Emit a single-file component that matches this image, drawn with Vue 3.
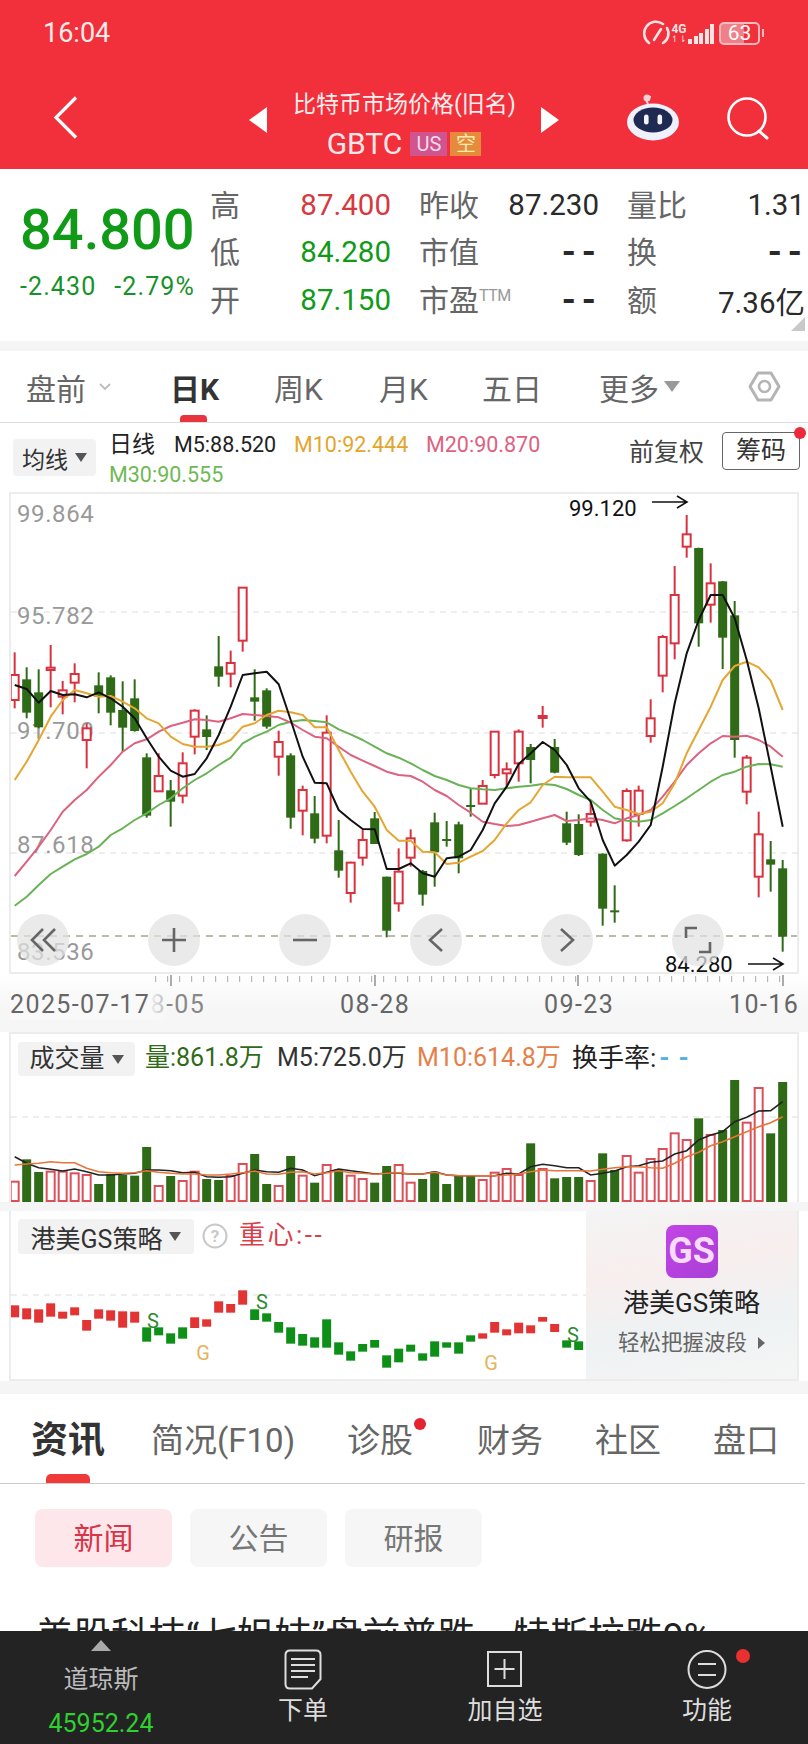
<script setup>
// данные свечей: [цвет, верх тени, верх тела, низ тела, низ тени] (y в пикселях кропа, 490 + y/3)
const rawCandles = [
  ['r',487,555,630,655],['g',532,568,668,685],['g',538,607,712,715],['r',465,533,540,652],['r',573,601,620,673],
  ['r',520,552,578,637],['r',700,715,750,835],['g',547,586,620,670],['g',556,562,668,706],['g',574,660,713,785],
  ['g',568,625,723,725],['g',790,802,977,983],['r',790,858,904,905],['g',870,901,935,1010],['r',787,820,917,940],
  ['r',658,662,740,793],['g',676,718,741,780],['g',438,529,560,590],['r',482,519,551,592],['r',293,293,452,485],
  ['g',538,622,635,692],['g',595,601,710,716],['r',722,756,800,857],['g',790,796,983,1016],['r',887,900,962,1036],
  ['g',918,970,1046,1060],['r',676,728,1037,1060],['g',990,1081,1142,1163],['r',1115,1118,1209,1238],['r',1020,1050,1103,1127],
  ['g',966,985,1062,1062],['g',1160,1160,1322,1342],['r',1075,1145,1240,1265],['r',1018,1045,1103,1130],['g',1140,1143,1214,1247],
  ['g',968,997,1087,1190],['g',993,1047,1053,1070],['g',995,1003,1105,1150],['g',895,945,950,980],['r',870,888,941,942],
  ['r',723,725,855,865],['r',817,838,850,890],['r',718,725,820,875],['g',762,771,810,880],['r',648,678,683,713],
  ['g',747,771,848,850],['g',965,1000,1058,1065],['g',973,1002,1095,1098],['r',935,972,995,1010],['g',1090,1091,1256,1307],
  ['g',1186,1261,1265,1298],['r',895,903,1051,1055],['r',887,902,972,1010],['r',628,685,738,758],['r',435,441,557,607],
  ['r',228,315,460,508],['r',75,133,170,203],['g',173,174,400,470],['r',220,280,344,398],['g',273,274,443,537],
  ['g',333,376,750,803],['r',795,803,905,943],['r',965,1033,1160,1222],['g',1053,1108,1124,1205],['g',1110,1135,1340,1385]
]
const xAt = (i) => 14.67 + 12 * i
const py = (z) => 490 + z / 3
const vy = (z) => 1000 + z / 3

const candles = rawCandles.map((c, i) => ({
  up: c[0] === 'r',
  x: xAt(i),
  wt: py(c[1]),
  wb: py(c[4]),
  bt: py(c[2]),
  bh: Math.max(py(c[3]) - py(c[2]), 2)
}))

const toLine = (arr, fn) => arr.map((z, i) => `${xAt(i).toFixed(1)},${fn(z).toFixed(1)}`).join(' ')

const ma5 = [585,597,638,603,615,613,622,607,625,650,685,745,800,842,860,852,805,735,650,555,550,545,583,690,800,878,880,960,990,1017,1018,1137,1137,
  1120,1150,1160,1105,1100,1080,1020,940,890,822,790,756,780,825,895,935,1050,1127,1095,1055,1005,830,640,490,390,315,315,385,510,655,830,1010]
const ma10 = [870,815,750,680,630,600,610,620,618,635,655,685,700,740,762,770,770,765,750,710,700,675,662,667,675,712,712,780,845,905,950,1020,1052,
  1052,1085,1087,1122,1118,1100,1083,1050,1000,960,937,885,860,862,862,862,905,950,960,972,965,940,880,790,720,650,570,528,515,532,572,660]
const ma20 = [1158,1115,1070,1020,965,930,900,860,825,785,760,748,725,708,698,688,690,695,685,672,675,678,682,698,720,740,745,770,795,812,828,845,855,
  858,875,900,918,945,968,995,1002,1008,1005,995,985,975,993,990,985,990,1000,985,975,960,920,875,825,790,760,738,740,737,750,770,800]
const ma30 = [1247,1220,1185,1152,1130,1108,1092,1070,1035,1015,990,970,945,925,895,870,850,825,803,760,740,725,705,695,690,693,697,718,733,750,770,790,803,
  820,840,858,870,885,895,898,900,895,890,887,882,885,897,915,930,960,985,992,995,990,970,948,925,900,875,855,845,830,822,823,830]

const maLines = [
  { color: '#69b356', points: toLine(ma30, py) },
  { color: '#dd6280', points: toLine(ma20, py) },
  { color: '#e5a632', points: toLine(ma10, py) },
  { color: '#111', points: toLine(ma5, py) }
]

const volTops = [545,478,516,515,515,520,525,552,522,525,527,441,558,528,543,515,537,540,528,492,462,552,558,468,527,548,495,508,527,537,548,498,495,
  548,537,515,552,525,528,540,518,507,525,430,507,535,531,531,543,460,510,468,518,477,447,400,420,355,405,390,240,368,264,400,246]
const volBars = volTops.map((z, i) => ({
  up: rawCandles[i][0] === 'r',
  x: xAt(i),
  y: vy(z),
  h: 1202 - vy(z)
}))
const volBlack = [470,490,503,508,513,507,515,525,525,522,520,510,510,512,518,517,530,532,530,520,510,515,517,505,510,527,517,507,512,517,522,520,520,
  522,522,515,525,527,527,527,527,520,522,500,493,497,503,503,525,520,513,500,497,487,483,462,452,420,405,395,365,352,333,332,305]
const volOrange = [495,492,490,485,488,488,505,515,518,520,518,512,517,520,522,522,525,525,522,518,513,522,523,517,515,522,518,512,518,520,523,520,518,
  522,522,517,525,527,527,527,527,525,522,515,510,512,512,512,513,508,503,500,500,503,505,490,470,457,437,425,410,395,380,368,350]
const volLines = [
  { color: '#222', points: toLine(volBlack, vy) },
  { color: '#e8743a', points: toLine(volOrange, vy) }
]

const gsRaw = [
  [916,952],[925,958],[928,968],[910,950],[935,956],[922,946],[960,992],[928,956],[931,962],[934,983],[935,968],
  [982,1025],[982,1006],[1000,1031],[982,1016],[952,984],[958,980],[904,938],[912,938],[871,914],[928,960],[940,965],
  [966,998],[982,1031],[1002,1037],[1012,1043],[958,1043],[1027,1064],[1054,1082],[1032,1055],[1020,1043],[1066,1103],[1046,1087],
  [1034,1055],[1060,1082],[1024,1070],[1027,1043],[1027,1061],[1006,1025],[1000,1016],[966,998],[988,1006],[968,1000],[976,1000],
  [951,965],[972,996],[1021,1043],[1024,1050]
]
const isGsRed = (i) => i <= 10 || (i >= 15 && i <= 19) || (i >= 39 && i <= 45)
const gsBars = gsRaw.map((b, i) => ({
  x: xAt(i) - 4.5,
  y: vy(b[0]),
  h: vy(b[1]) - vy(b[0]),
  red: isGsRed(i)
}))
const gsMarks = [
  { t: 'S', x: 153, y: 1321, c: '#2c8c2c' },
  { t: 'G', x: 203, y: 1353, c: '#e6b35c' },
  { t: 'S', x: 262, y: 1302, c: '#2c8c2c' },
  { t: 'G', x: 491, y: 1363, c: '#e6b35c' },
  { t: 'S', x: 573, y: 1335, c: '#2c8c2c' }
]

const axisLabels = [
  { t: '99.864', y: 514 },
  { t: '95.782', y: 616 },
  { t: '91.700', y: 731 },
  { t: '87.618', y: 845 },
  { t: '83.536', y: 952 }
]
const grids = [612, 733, 853]

// риски под графиком
const ticks = []
for (let i = 12; i <= 64; i++) ticks.push({ x: xAt(i) - 3, major: false })
const majors = [171, 375, 578, 783]

const stats = [
  [{ l: '高', v: '87.400', c: 'red' }, { l: '昨收', v: '87.230', c: 'dark' }, { l: '量比', v: '1.31', c: 'dark' }],
  [{ l: '低', v: '84.280', c: 'green' }, { l: '市值', v: '--', c: 'dark' }, { l: '换', v: '--', c: 'dark' }],
  [{ l: '开', v: '87.150', c: 'green' }, { l: '市盈', ttm: true, v: '--', c: 'dark' }, { l: '额', v: '7.36亿', c: 'dark' }]
]
const periods = ['周K', '月K', '五日']
const newsTabs = ['简况(F10)', '诊股', '财务', '社区', '盘口']
</script>

<template>
  <div class="page">
    <header class="top">
      <div class="status">
        <span class="time">16:04</span>
        <div class="status-icons">
          <svg class="gauge" width="28" height="26" viewBox="0 0 28 26" fill="none" stroke="#fbe3e4" stroke-width="2.6" stroke-linecap="round">
            <path d="M6 23 A11 11 0 0 1 20 4" />
            <path d="M24 8 A11 11 0 0 1 20 23" />
            <path d="M11 20 L18 9" />
          </svg>
          <div class="net">
            <span class="net-4g">4G</span>
            <span class="net-arrows">↿⇂</span>
          </div>
          <div class="bars">
            <i style="height:5px"></i><i style="height:8px"></i><i style="height:11px"></i><i style="height:15px"></i><i style="height:20px"></i>
          </div>
          <div class="battery"><span>63</span></div>
          <div class="battery-tip"></div>
        </div>
      </div>
      <div class="nav">
        <svg class="back" width="25" height="43" viewBox="0 0 25 43" fill="none" stroke="#fff" stroke-width="3.2">
          <path d="M23 1.5 L3 21.5 L23 41.5" />
        </svg>
        <div class="nav-center">
          <div class="tri tri-left"></div>
          <div class="name">
            <div class="name-cn">比特币市场价格(旧名)</div>
            <div class="name-code">
              <span class="code">GBTC</span>
              <span class="tag tag-us">US</span>
              <span class="tag tag-short">空</span>
            </div>
          </div>
          <div class="tri tri-right"></div>
        </div>
        <div class="nav-right">
          <svg width="54" height="50" viewBox="0 0 54 50">
            <path d="M22 11 C19 6 21 3 25 4" fill="none" stroke="#f8d0d5" stroke-width="2" />
            <circle cx="21" cy="5" r="3.5" fill="#f8d0d5" />
            <ellipse cx="27" cy="29" rx="26" ry="18.5" fill="#eef0fb" />
            <ellipse cx="27" cy="27" rx="19.5" ry="12.5" fill="#1e2a52" />
            <rect x="18" y="21.5" width="4.6" height="10" rx="2.3" fill="#f2f4ff" />
            <rect x="31.5" y="21.5" width="4.6" height="10" rx="2.3" fill="#f2f4ff" />
          </svg>
          <svg class="search" width="44" height="46" viewBox="0 0 44 46" fill="none" stroke="#fff" stroke-width="3">
            <circle cx="21" cy="21" r="18.5" stroke-width="2.6" />
            <path d="M33 35 L41 42" stroke-linecap="round" />
          </svg>
        </div>
      </div>
    </header>

    <section class="quote">
      <div class="price">
        <div class="last">84.800</div>
        <div class="change"><span>-2.430</span><span>-2.79%</span></div>
      </div>
      <div class="stats">
        <template v-for="(row, r) in stats" :key="r">
          <div v-for="cell in row" :key="cell.l" class="stat">
            <span class="stat-label">{{ cell.l }}<small v-if="cell.ttm">TTM</small></span>
            <span class="stat-value" :class="[cell.c, { dash: cell.v === '--' }]">{{ cell.v }}</span>
          </div>
        </template>
      </div>
      <div class="corner"></div>
    </section>
    <div class="band band-a"></div>

    <div class="tabs">
      <div class="tab">盘前<svg class="chev" width="12" height="8" viewBox="0 0 12 8" fill="none" stroke="#bbb" stroke-width="1.8"><path d="M1 1 L6 6 L11 1" /></svg></div>
      <div class="tab tab-on">日K<i class="mark"></i></div>
      <div v-for="p in periods" :key="p" class="tab">{{ p }}</div>
      <div class="tab">更多<i class="down down-big"></i></div>
      <svg class="hex" width="33" height="31" viewBox="0 0 33 31" fill="none" stroke="#b4b4b4" stroke-width="3">
        <path d="M10 2 H23 L31 15.5 L23 29 H10 L2 15.5 Z" stroke-linejoin="round" />
        <circle cx="16.5" cy="15.5" r="5.5" stroke-width="2.6" />
      </svg>
    </div>

    <div class="ma-head">
      <div class="chip chip-ma">均线<i class="down"></i></div>
      <div class="ma-values">
        <div class="ma-row">
          <span class="ma-day">日线</span>
          <span class="m5">M5:88.520</span>
          <span class="m10">M10:92.444</span>
          <span class="m20">M20:90.870</span>
        </div>
        <div class="ma-row"><span class="m30">M30:90.555</span></div>
      </div>
      <div class="ma-right">
        <span class="adjust">前复权</span>
        <div class="chouma">筹码<i class="chouma-dot"></i></div>
      </div>
    </div>

    <div class="box box-price">
      <svg class="chart" width="786" height="478" viewBox="11 494 786 478">
        <line v-for="g in grids" :key="g" x1="11" x2="797" :y1="g" :y2="g" stroke="#ddd" stroke-width="1" stroke-dasharray="6 5" />
        <text v-for="a in axisLabels" :key="a.t" class="axis" x="17" :y="a.y">{{ a.t }}</text>
        <line x1="11" x2="797" y1="936" y2="936" stroke="#a5a58f" stroke-width="1.4" stroke-dasharray="7 6" />
        <g v-for="c in candles" :key="c.x">
          <line :x1="c.x" :x2="c.x" :y1="c.wt" :y2="c.wb" :stroke="c.up ? '#d8323f' : '#2f6a17'" stroke-width="2" />
          <rect v-if="c.up" :x="c.x - 4" :y="c.bt" width="8" :height="c.bh" fill="#fff" stroke="#d8323f" stroke-width="2" />
          <rect v-else :x="c.x - 4.5" :y="c.bt" width="9" :height="c.bh" fill="#2f6a17" />
        </g>
        <polyline v-for="l in maLines" :key="l.color" :points="l.points" fill="none" :stroke="l.color" stroke-width="2" stroke-linejoin="round" />
        <text class="mark-text" x="569" y="508">99.120</text>
        <path d="M652 502 H686 M677 496 L687 502 L677 508" fill="none" stroke="#111" stroke-width="1.6" />
        <text class="mark-text" x="665" y="964">84.280</text>
        <path d="M748 964 H782 M773 958 L783 964 L773 970" fill="none" stroke="#111" stroke-width="1.6" />
      </svg>
      <div class="zoom-row">
        <button class="round">
          <svg width="26" height="26" viewBox="0 0 26 26" fill="none" stroke="#666" stroke-width="2.6"><path d="M13 2 L2 13 L13 24 M25 2 L14 13 L25 24" /></svg>
        </button>
        <button class="round">
          <svg width="26" height="26" viewBox="0 0 26 26" fill="none" stroke="#666" stroke-width="2.6"><path d="M13 1 V25 M1 13 H25" /></svg>
        </button>
        <button class="round">
          <svg width="26" height="26" viewBox="0 0 26 26" fill="none" stroke="#666" stroke-width="2.6"><path d="M1 13 H25" /></svg>
        </button>
        <button class="round">
          <svg width="26" height="26" viewBox="0 0 26 26" fill="none" stroke="#666" stroke-width="2.6"><path d="M19 2 L7 13 L19 24" /></svg>
        </button>
        <button class="round">
          <svg width="26" height="26" viewBox="0 0 26 26" fill="none" stroke="#666" stroke-width="2.6"><path d="M7 2 L19 13 L7 24" /></svg>
        </button>
        <button class="round">
          <svg width="30" height="30" viewBox="0 0 30 30" fill="none" stroke="#666" stroke-width="2.6"><path d="M3 13 V3 H14 M27 17 V27 H16" /></svg>
        </button>
      </div>
    </div>

    <div class="dates">
      <svg class="ticks" width="808" height="14" viewBox="0 0 808 14">
        <line v-for="t in ticks" :key="t.x" :x1="t.x" :x2="t.x" y1="2" y2="8" stroke="#aaa" stroke-width="1" />
        <line v-for="m in majors" :key="m" :x1="m" :x2="m" y1="1" y2="12" stroke="#888" stroke-width="1.4" />
      </svg>
      <div class="date-row">
        <span class="date date-first">2025-07-17</span>
        <span class="date date-b">08-05</span>
        <span class="date date-c">08-28</span>
        <span class="date date-d">09-23</span>
        <span class="date date-e">10-16</span>
      </div>
    </div>

    <div class="box box-vol">
      <div class="vol-head">
        <div class="chip chip-vol">成交量<i class="down"></i></div>
        <span class="vol-now">量:861.8万</span>
        <span class="vol-m5">M5:725.0万</span>
        <span class="vol-m10">M10:614.8万</span>
        <span class="vol-rate">换手率:<em>--</em></span>
      </div>
      <svg class="chart" width="786" height="122" viewBox="11 1080 786 122">
        <line x1="11" x2="797" y1="1117" y2="1117" stroke="#ddd" stroke-dasharray="6 5" />
        <g v-for="b in volBars" :key="b.x">
          <rect v-if="b.up" :x="b.x - 4" :y="b.y" width="8" :height="b.h - 1" fill="#fff" stroke="#d9505b" stroke-width="2" />
          <rect v-else :x="b.x - 4.5" :y="b.y" width="9" :height="b.h" fill="#2f6a17" />
        </g>
        <polyline v-for="l in volLines" :key="l.color" :points="l.points" fill="none" :stroke="l.color" stroke-width="1.6" />
      </svg>
    </div>
    <div class="band band-b"></div>

    <div class="box box-gs">
      <div class="gs-left">
        <div class="gs-head">
          <div class="chip chip-gs">港美GS策略<i class="down"></i></div>
          <svg class="help" width="26" height="26" viewBox="0 0 26 26">
            <circle cx="13" cy="13" r="11.5" fill="none" stroke="#c8c8c8" stroke-width="2" />
            <text x="13" y="19" text-anchor="middle" class="help-q">?</text>
          </svg>
          <span class="gs-center">重心:--</span>
        </div>
        <svg class="chart" width="575" height="119" viewBox="11 1260 575 119">
          <line x1="11" x2="586" y1="1295" y2="1295" stroke="#ddd" stroke-dasharray="6 5" />
          <rect v-for="b in gsBars" :key="b.x" :x="b.x" :y="b.y" width="9" :height="b.h" :fill="b.red ? '#e33434' : '#0e8f17'" />
          <text v-for="m in gsMarks" :key="m.x" class="gs-mark" :x="m.x" :y="m.y" :fill="m.c">{{ m.t }}</text>
        </svg>
      </div>
      <div class="gs-promo">
        <div class="gs-logo">GS</div>
        <div class="gs-title">港美GS策略</div>
        <div class="gs-sub">轻松把握波段<i class="right"></i></div>
      </div>
    </div>
    <div class="band band-c"></div>

    <div class="news-tabs">
      <div class="news-tab news-on">资讯<i class="news-mark"></i></div>
      <div v-for="t in newsTabs" :key="t" class="news-tab">
        {{ t }}<i v-if="t === '诊股'" class="news-dot"></i>
      </div>
    </div>
    <div class="subs">
      <div class="sub sub-on">新闻</div>
      <div class="sub">公告</div>
      <div class="sub">研报</div>
    </div>
    <div class="headline">美股科技“七姐妹”盘前普跌，特斯拉跌9%</div>

    <footer class="bottom">
      <div class="bottom-item index">
        <i class="up"></i>
        <span class="index-name">道琼斯</span>
        <span class="index-val">45952.24</span>
      </div>
      <div class="bottom-item">
        <svg width="38" height="41" viewBox="0 0 38 41" fill="none" stroke="#ddd" stroke-width="2">
          <path d="M6 1.5 H32 Q36.5 1.5 36.5 6 V30 L28 39.5 H6 Q1.5 39.5 1.5 35 V6 Q1.5 1.5 6 1.5 Z" />
          <path d="M7 10 H31 M7 16 H31 M7 22 H31 M7 28 H24" stroke-width="1.8" />
        </svg>
        <span class="bottom-text">下单</span>
      </div>
      <div class="bottom-item">
        <svg width="38" height="41" viewBox="0 0 38 41" fill="none" stroke="#ddd" stroke-width="2">
          <rect x="2" y="3" width="33" height="34" />
          <path d="M18.5 10 V30 M8.5 20 H28.5" />
        </svg>
        <span class="bottom-text">加自选</span>
      </div>
      <div class="bottom-item">
        <svg width="40" height="41" viewBox="0 0 40 41" fill="none" stroke="#ddd" stroke-width="2">
          <circle cx="20" cy="20.5" r="18.5" />
          <path d="M11 15 H29 M11 26 H29" />
        </svg>
        <span class="bottom-text">功能</span>
        <i class="func-dot"></i>
      </div>
    </footer>
  </div>
</template>

<style scoped>
.page {
  position: relative;
  width: 808px;
  height: 1744px;
  overflow: hidden;
  background: #fff;
  font-family: Roboto, "Noto Sans CJK SC", sans-serif;
  color: #222;
}
i { display: block; font-style: normal; }
em { font-style: normal; }

/* шапка */
.top { height: 169px; background: #f1303c; color: #fff; }
.status { height: 66px; box-sizing: border-box; display: flex; justify-content: space-between; align-items: flex-start; padding: 11px 44px 0 43px; }
.time { font-size: 27px; line-height: 44px; height: 44px; color: #fbeaea; }
.status-icons { display: flex; align-items: center; height: 44px; }
.gauge { margin-right: -2px; }
.net { width: 18px; margin-left: 1px; display: flex; flex-direction: column; align-items: center; line-height: 1; }
.net-4g { font-size: 12px; font-weight: 700; color: #fbe3e4; }
.net-arrows { font-size: 9px; color: #fbe3e4; }
.bars { display: flex; align-items: flex-end; gap: 1.5px; height: 22px; }
.bars i { width: 4px; background: #fbe3e4; }
.battery {
  width: 41px;
  height: 23px;
  margin-left: 5px;
  border: 2px solid #f6b9bd;
  border-radius: 5px;
  box-sizing: border-box;
  background: linear-gradient(90deg, #f08087 63%, transparent 63%);
  text-align: center;
  font-size: 21px;
  line-height: 19px;
  color: #fff;
}
.battery-tip { width: 2px; height: 8px; margin-left: 2px; background: #f6b9bd; }

.nav { position: relative; height: 103px; display: grid; grid-template-columns: 1fr auto 1fr; align-items: center; }
.back { margin-left: 53px; }
.nav-center { display: flex; align-items: center; margin-top: 14px; }
.tri { width: 0; height: 0; border-top: 13px solid transparent; border-bottom: 13px solid transparent; margin-top: -10px; }
.tri-left { border-right: 18px solid #fff; margin-right: 26px; }
.tri-right { border-left: 18px solid #fff; margin-left: 26px; }
.name { width: 222px; text-align: center; }
.name-cn { font-size: 23px; line-height: 30px; white-space: nowrap; color: #fdeeee; }
.name-code { display: flex; justify-content: center; align-items: center; height: 30px; margin-top: 9px; }
.code { font-size: 30px; line-height: 30px; margin-right: 8px; color: #fbe7e7; }
.tag { display: block; height: 24px; line-height: 24px; text-align: center; font-size: 20px; }
.tag-us { width: 37px; background: #d1548f; margin-right: 3px; color: #f6dcea; }
.tag-short { width: 31px; background: #e68a3c; color: #fbe9b0; font-size: 20px; }
.nav-right { display: flex; align-items: center; justify-content: flex-end; gap: 46px; padding-right: 38px; }
.search { margin-top: 3px; }

/* котировка */
.quote { position: relative; height: 172px; box-sizing: border-box; padding: 12px 3px 0 20px; display: flex; }
.price { width: 190px; flex: none; }
.last { font-size: 56px; line-height: 58px; margin-top: 20px; font-weight: 500; color: #119a17; white-space: nowrap; }
.change { display: flex; gap: 18px; margin-top: 13px; font-size: 25px; line-height: 30px; letter-spacing: 1.1px; color: #17922a; white-space: nowrap; }
.stats { display: grid; grid-template-columns: 181px 180px 178px; column-gap: 28px; grid-auto-rows: 47.5px; }
.stat { display: flex; justify-content: space-between; align-items: center; white-space: nowrap; }
.stat-label { font-size: 30px; color: #666; position: relative; margin-top: -4px; }
.stat-label small { position: absolute; left: 60px; top: 11px; font-size: 16px; line-height: 18px; color: #999; letter-spacing: -0.5px; }
.stat-value { font-size: 29.5px; }
.dash { font-size: 36px; font-weight: 700; letter-spacing: 6px; margin-right: -3px; }
.red { color: #d43a40; }
.green { color: #119a17; }
.dark { color: #2a2a2a; }
.corner { position: absolute; right: 3px; bottom: 10px; width: 0; height: 0; border-left: 14px solid transparent; border-bottom: 14px solid #c9c9c9; }
.band { background: #f5f5f5; }
.band-a { height: 10px; }
.band-b { height: 9px; }
.band-c { height: 13px; }

/* вкладки периода */
.tabs {
  height: 72px;
  box-sizing: border-box;
  border-bottom: 1px solid #ddd;
  padding-left: 26px;
  display: grid;
  grid-template-columns: 144px 104px 105px 103px 117px 149px 33px;
  align-items: center;
  font-size: 30px;
  color: #666;
}
.tab { position: relative; display: flex; align-items: center; white-space: nowrap; height: 71px; }
.tab-on { font-weight: 700; color: #333; }
.chev { margin-left: 13px; }
.mark { position: absolute; left: 10px; bottom: 0; width: 27px; height: 7px; border-radius: 4px 4px 0 0; background: #e8343c; }
.down { width: 0; height: 0; border-left: 6px solid transparent; border-right: 6px solid transparent; border-top: 9px solid #555; margin-left: 7px; }
.down-big { border-left-width: 8px; border-right-width: 8px; border-top: 11px solid #999; margin-left: 5px; }
.hex { display: block; }

/* средние */
.ma-head { position: relative; height: 69px; display: flex; padding-left: 13px; }
.chip { background: #f2f2f2; border-radius: 4px; display: flex; align-items: center; justify-content: center; white-space: nowrap; color: #333; }
.chip-ma { width: 83px; height: 37px; margin-top: 16px; font-size: 23px; }
.ma-values { margin-left: 13px; font-size: 21.5px; line-height: 30px; margin-top: 7px; }
.ma-row { display: flex; white-space: nowrap; }
.ma-day { width: 65px; font-size: 23px; color: #222; }
.m5 { width: 120px; color: #222; }
.m10 { width: 132px; color: #e3a62d; }
.m20 { color: #dd6280; }
.m30 { color: #6fb955; }
.ma-right { margin-left: auto; display: flex; align-items: flex-start; padding-right: 8px; }
.adjust { font-size: 25px; line-height: 36px; margin-top: 12px; color: #444; }
.chouma {
  position: relative;
  width: 78px;
  height: 38px;
  box-sizing: border-box;
  margin: 9px 0 0 18px;
  border: 1px solid #666;
  border-radius: 4px;
  font-size: 25px;
  line-height: 35px;
  text-align: center;
  color: #333;
}
.chouma-dot { position: absolute; right: -7px; top: -6px; width: 12px; height: 12px; border-radius: 50%; background: #ec2b3a; }

.box { margin-left: 9px; width: 790px; box-sizing: border-box; border: 2px solid #ececec; background: #fff; }
.chart { display: block; }
.box-price { position: relative; height: 482px; }
.axis { font-size: 24px; letter-spacing: 0.6px; fill: #999; dominant-baseline: central; }
.mark-text { font-size: 22px; fill: #111; dominant-baseline: central; }
.zoom-row { position: absolute; left: 6px; top: 420px; display: flex; gap: 79px; }
.round { width: 52px; height: 52px; padding: 0; border: 0; border-radius: 50%; background: rgba(226, 226, 226, 0.72); display: flex; align-items: center; justify-content: center; }

/* даты */
.dates { height: 58px; box-sizing: border-box; background: linear-gradient(#fff, #f6f6f6 60%); }
.ticks { display: block; }
.date-row { display: flex; height: 30px; margin-top: 2px; padding-left: 10px; font-size: 25px; line-height: 30px; letter-spacing: 1.4px; color: #666; }
.date { white-space: nowrap; }
.date-first { position: relative; z-index: 1; width: 157px; background: linear-gradient(90deg, #f9f9f9 88%, rgba(249, 249, 249, 0.4)); }
.date-b { width: 70px; margin-left: -32px; color: #888; }
.date-c { width: 70px; margin-left: 135px; }
.date-d { width: 70px; margin-left: 134px; }
.date-e { margin-left: 115px; }

/* объём */
.box-vol { height: 170px; border-bottom: 0; }
.vol-head { height: 46px; display: flex; align-items: flex-start; padding-left: 7px; font-size: 25px; line-height: 48px; white-space: nowrap; }
.chip-vol { width: 117px; height: 34px; margin-top: 8px; font-size: 25px; flex: none; }
.vol-now { margin-left: 10px; width: 132px; color: #2f6a17; }
.vol-m5 { width: 140px; color: #333; }
.vol-m10 { width: 155px; color: #e5804a; }
.vol-rate { font-size: 26px; color: #222; }
.vol-rate em { color: #56b1e0; letter-spacing: 9px; margin-left: 3px; font-weight: 700; }

/* GS */
.box-gs { height: 170px; border-top: 0; display: flex; }
.gs-left { width: 575px; flex: none; }
.gs-head { height: 49px; display: flex; align-items: flex-start; padding-left: 7px; white-space: nowrap; }
.chip-gs { width: 176px; height: 35px; margin-top: 8px; font-size: 25px; }
.help { margin: 12px 0 0 8px; }
.help-q { font-size: 17px; font-weight: 700; fill: #c8c8c8; }
.gs-center { margin-left: 11px; font-size: 26px; line-height: 48px; color: #d8404a; letter-spacing: 2.5px; }
.gs-mark { font-size: 20px; text-anchor: middle; dominant-baseline: central; }
.gs-promo {
  flex: 1;
  display: flex;
  flex-direction: column;
  align-items: center;
  background: linear-gradient(170deg, #f4f4f4 0%, #f8eeee 35%, #eef2f3 65%, #f5f5f5 100%);
}
.gs-logo {
  width: 52px;
  height: 53px;
  margin-top: 14px;
  border-radius: 8px;
  background: linear-gradient(135deg, #c244e6, #a93fd6);
  color: #f8dcff;
  font-size: 36px;
  font-weight: 700;
  line-height: 53px;
  text-align: center;
}
.gs-title { margin-top: 8px; font-size: 26px; line-height: 34px; color: #222; white-space: nowrap; }
.gs-sub { margin-top: 8px; display: flex; align-items: center; font-size: 21.5px; line-height: 30px; color: #666; white-space: nowrap; }
.right { width: 0; height: 0; margin-left: 11px; border-top: 6px solid transparent; border-bottom: 6px solid transparent; border-left: 7px solid #666; }

/* новости */
.news-tabs {
  height: 90px;
  box-sizing: border-box;
  width: 805px;
  border-bottom: 1px solid #ccc;
  padding-left: 31px;
  display: grid;
  grid-template-columns: 120px 196px 130px 118px 118px auto;
  font-size: 33px;
  color: #666;
}
.news-tab { position: relative; height: 89px; box-sizing: border-box; padding-top: 4px; line-height: 85px; white-space: nowrap; }
.news-on { font-size: 37px; font-weight: 700; color: #333; }
.news-mark { position: absolute; left: 15px; bottom: 0; width: 44px; height: 9px; border-radius: 5px 5px 0 0; background: #f03a3a; }
.news-dot { position: absolute; left: 67px; top: 24px; width: 12px; height: 12px; border-radius: 50%; background: #e5232f; }
.subs { display: flex; gap: 18px; padding: 25px 0 0 35px; }
.sub { width: 137px; height: 58px; border-radius: 8px; background: #f6f6f6; font-size: 30px; line-height: 60px; text-align: center; color: #777; }
.sub-on { background: #fde7ea; color: #d8344a; }
.headline { margin: 41px 0 0 36px; font-size: 37.5px; line-height: 56px; white-space: nowrap; color: #222; }

/* низ */
.bottom {
  position: absolute;
  left: 0;
  right: 0;
  bottom: 0;
  height: 113px;
  background: #232323;
  display: grid;
  grid-template-columns: repeat(4, 202px);
}
.bottom-item { position: relative; display: flex; flex-direction: column; align-items: center; padding-top: 18px; }
.bottom-text { margin-top: 3px; font-size: 25px; line-height: 36px; color: #ddd; }
.index { padding-top: 9px; }
.up { width: 0; height: 0; border-left: 10px solid transparent; border-right: 10px solid transparent; border-bottom: 11px solid #aaa; }
.index-name { margin-top: 11px; font-size: 25px; line-height: 36px; color: #bbb; }
.index-val { margin-top: 11px; font-size: 25px; line-height: 30px; color: #2fd02f; }
.func-dot { position: absolute; left: 130px; top: 18px; width: 14px; height: 14px; border-radius: 50%; background: #ea3030; }
</style>

<style>
html, body { margin: 0; background: #fff; }
</style>
